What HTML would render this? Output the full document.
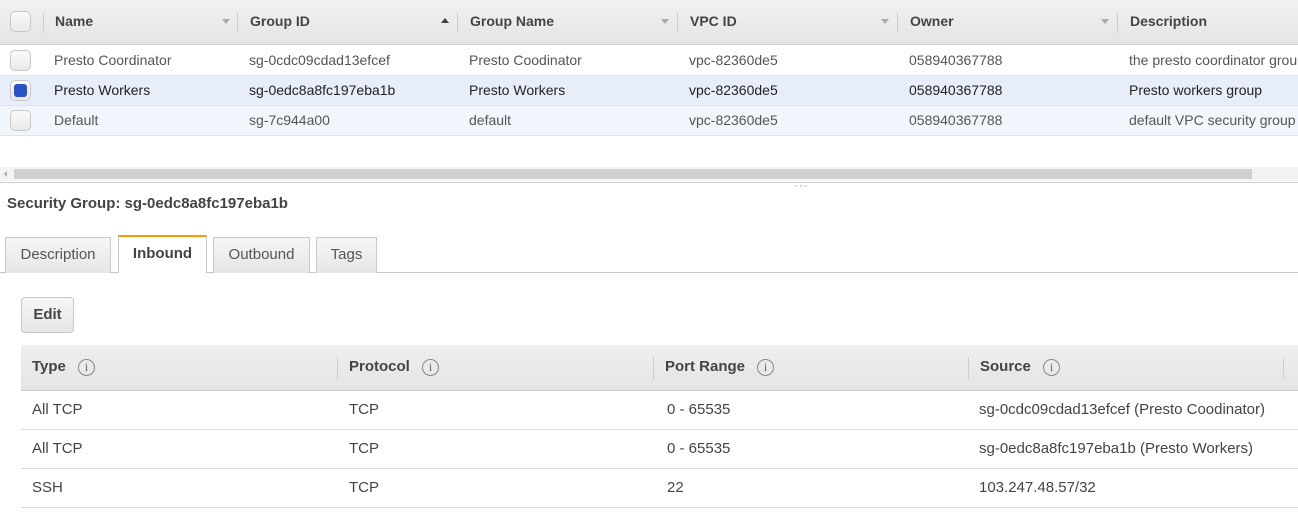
<!DOCTYPE html>
<html><head><style>
*{margin:0;padding:0;box-sizing:border-box}
body{width:1298px;height:523px;overflow:hidden;background:#fff;font-family:"Liberation Sans",Arial,sans-serif;font-size:14px;color:#444;position:relative}
.a{position:absolute;white-space:nowrap}
.hdr{position:absolute;left:0;top:0;width:1298px;height:45px;background:linear-gradient(#f2f2f2,#e4e4e4);border-bottom:1px solid #cfcfcf}
.h{font-weight:bold;color:#444;top:13px}
.sep{position:absolute;width:1px;background:#ccc}
.row{position:absolute;left:0;width:1298px;height:30px;border-bottom:1px solid #e2e2e2}
.cb{position:absolute;left:10px;width:21px;height:21px;border:1px solid #c8c8c8;border-radius:5px;background:linear-gradient(#fafafa,#e9e9e9)}
.arr{position:absolute;top:19px;width:0;height:0;border-left:4px solid transparent;border-right:4px solid transparent;border-top:5px solid #aaa}
.tab{position:absolute;top:237px;height:36px;border:1px solid #c8c8c8;border-bottom:none;background:linear-gradient(#f6f6f6,#e6e6e6);text-align:center;line-height:34px;font-size:15px;color:#555}
.bh{position:absolute;left:21px;top:345px;width:1277px;height:46px;background:linear-gradient(#efefef,#e4e4e4);border-bottom:1px solid #ccc}
.i{position:absolute;top:0;width:17px;height:17px;border:1.5px solid #888;border-radius:50%;font-size:12px;line-height:14px;text-align:center;color:#666;font-weight:normal;font-family:"Liberation Serif",serif}
.br{position:absolute;left:21px;width:1277px;height:39px;border-bottom:1px solid #ddd}
</style></head><body>
<div class="hdr"></div>
<div class="cb" style="top:11px"></div>
<div class="sep" style="left:43px;top:13px;height:20px"></div>
<div class="sep" style="left:237px;top:13px;height:20px"></div>
<div class="sep" style="left:457px;top:13px;height:20px"></div>
<div class="sep" style="left:677px;top:13px;height:20px"></div>
<div class="sep" style="left:897px;top:13px;height:20px"></div>
<div class="sep" style="left:1117px;top:13px;height:20px"></div>
<div class="a h" style="left:55px">Name</div>
<div class="a h" style="left:250px">Group ID</div>
<div class="a h" style="left:470px">Group Name</div>
<div class="a h" style="left:690px">VPC ID</div>
<div class="a h" style="left:910px">Owner</div>
<div class="a h" style="left:1130px">Description</div>
<div class="arr" style="left:222px"></div>
<div class="arr" style="left:441px;top:18px;border-top:none;border-bottom:5px solid #444"></div>
<div class="arr" style="left:661px"></div>
<div class="arr" style="left:881px"></div>
<div class="arr" style="left:1101px"></div>

<div class="row" style="top:46px;background:#fff"></div>
<div class="row" style="top:76px;background:#e8eef9"></div>
<div class="row" style="top:106px;background:#f1f6fc"></div>
<div class="cb" style="top:50px"></div>
<div class="cb" style="top:80px"><div style="position:absolute;left:3px;top:3px;width:13px;height:13px;border-radius:3px;background:#2a52c8"></div></div>
<div class="cb" style="top:110px"></div>
<div class="a" style="left:54px;top:52px;color:#555">Presto Coordinator</div>
<div class="a" style="left:249px;top:52px;color:#555">sg-0cdc09cdad13efcef</div>
<div class="a" style="left:469px;top:52px;color:#555">Presto Coodinator</div>
<div class="a" style="left:689px;top:52px;color:#555">vpc-82360de5</div>
<div class="a" style="left:909px;top:52px;color:#555">058940367788</div>
<div class="a" style="left:1129px;top:52px;color:#555">the presto coordinator group</div>
<div class="a" style="left:54px;top:82px;color:#222">Presto Workers</div>
<div class="a" style="left:249px;top:82px;color:#222">sg-0edc8a8fc197eba1b</div>
<div class="a" style="left:469px;top:82px;color:#222">Presto Workers</div>
<div class="a" style="left:689px;top:82px;color:#222">vpc-82360de5</div>
<div class="a" style="left:909px;top:82px;color:#222">058940367788</div>
<div class="a" style="left:1129px;top:82px;color:#222">Presto workers group</div>
<div class="a" style="left:54px;top:112px;color:#555">Default</div>
<div class="a" style="left:249px;top:112px;color:#555">sg-7c944a00</div>
<div class="a" style="left:469px;top:112px;color:#555">default</div>
<div class="a" style="left:689px;top:112px;color:#555">vpc-82360de5</div>
<div class="a" style="left:909px;top:112px;color:#555">058940367788</div>
<div class="a" style="left:1129px;top:112px;color:#555">default VPC security group</div>

<div class="a" style="left:0;top:167px;width:1298px;height:14px;background:#f3f3f3"></div>
<div class="a" style="left:14px;top:169px;width:1238px;height:10px;background:#d0d0d0"></div>
<div class="a" style="left:4px;top:171px;width:0;height:0;border-top:3px solid transparent;border-bottom:3px solid transparent;border-right:3px solid #aaa"></div>
<div class="a" style="left:0;top:182px;width:1298px;height:1px;background:#ccc"></div>
<div class="a" style="left:795px;top:183px;font-size:7px;color:#999;letter-spacing:2px">▫▫▫</div>

<div class="a" style="left:7px;top:195px;font-weight:bold;font-size:15px;color:#444">Security Group: sg-0edc8a8fc197eba1b</div>
<div class="a" style="left:0;top:272px;width:1298px;height:1px;background:#c8c8c8"></div>
<div class="tab" style="left:5px;width:106px">Description</div>
<div class="tab" style="left:118px;width:89px;top:235px;height:38px;background:#fff;border-top:2px solid #f90;font-weight:bold;color:#444">Inbound</div>
<div class="tab" style="left:213px;width:97px">Outbound</div>
<div class="tab" style="left:316px;width:61px">Tags</div>

<div class="a" style="left:21px;top:297px;width:53px;height:36px;border:1px solid #c8c8c8;border-radius:4px;background:linear-gradient(#f6f6f6,#e6e6e6);font-weight:bold;font-size:15px;text-align:center;line-height:34px;color:#444">Edit</div>

<div class="bh"></div>
<div class="sep" style="left:337px;top:357px;height:22px"></div>
<div class="sep" style="left:653px;top:357px;height:22px"></div>
<div class="sep" style="left:968px;top:357px;height:22px"></div>
<div class="sep" style="left:1283px;top:357px;height:22px"></div>
<div class="a h" style="left:32px;top:358px;font-size:15px">Type</div>
<div class="a h" style="left:349px;top:358px;font-size:15px">Protocol</div>
<div class="a h" style="left:665px;top:358px;font-size:15px">Port Range</div>
<div class="a h" style="left:980px;top:358px;font-size:15px">Source</div>
<div class="a" style="left:78px;top:359px"><span class="i">i</span></div>
<div class="a" style="left:422px;top:359px"><span class="i">i</span></div>
<div class="a" style="left:757px;top:359px"><span class="i">i</span></div>
<div class="a" style="left:1043px;top:359px"><span class="i">i</span></div>
<div class="br" style="top:391px"></div>
<div class="br" style="top:430px"></div>
<div class="br" style="top:469px"></div>
<div class="a" style="left:32px;top:401px;font-size:15px">All TCP</div>
<div class="a" style="left:349px;top:401px;font-size:15px">TCP</div>
<div class="a" style="left:667px;top:401px;font-size:15px">0 - 65535</div>
<div class="a" style="left:979px;top:401px;font-size:15px">sg-0cdc09cdad13efcef (Presto Coodinator)</div>
<div class="a" style="left:32px;top:440px;font-size:15px">All TCP</div>
<div class="a" style="left:349px;top:440px;font-size:15px">TCP</div>
<div class="a" style="left:667px;top:440px;font-size:15px">0 - 65535</div>
<div class="a" style="left:979px;top:440px;font-size:15px">sg-0edc8a8fc197eba1b (Presto Workers)</div>
<div class="a" style="left:32px;top:479px;font-size:15px">SSH</div>
<div class="a" style="left:349px;top:479px;font-size:15px">TCP</div>
<div class="a" style="left:667px;top:479px;font-size:15px">22</div>
<div class="a" style="left:979px;top:479px;font-size:15px">103.247.48.57/32</div>
</body></html>
